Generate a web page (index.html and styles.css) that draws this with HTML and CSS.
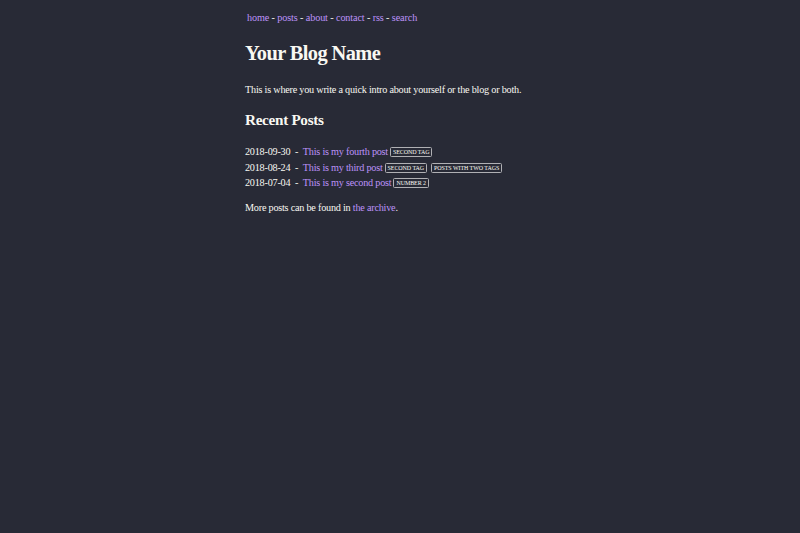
FILE: index.html
```html
<!DOCTYPE html>
<html lang="en">
<head>
<meta charset="utf-8">
<title>Your Blog Name</title>
<link rel="stylesheet" href="styles.css">
</head>
<body>
<div class="page">
  <header class="site-header">
    <nav class="nav">
      <a href="#">home</a> - <a href="#">posts</a> - <a href="#">about</a> - <a href="#">contact</a> - <a href="#">rss</a> - <a href="#">search</a>
    </nav>
  </header>
  <main>
    <h1 class="title">Your Blog Name</h1>
    <p class="intro">This is where you write a quick intro about yourself or the blog or both.</p>
    <h2 class="section-title">Recent Posts</h2>
    <ul class="posts">
      <li class="post"><span class="date">2018-09-30</span>&nbsp; - &nbsp;<a href="#">This is my fourth post</a><span class="tags"><span class="tag">second tag</span></span></li>
      <li class="post"><span class="date">2018-08-24</span>&nbsp; - &nbsp;<a href="#">This is my third post</a><span class="tags"><span class="tag">second tag</span><span class="tag">posts with two tags</span></span></li>
      <li class="post"><span class="date">2018-07-04</span>&nbsp; - &nbsp;<a href="#">This is my second post</a><span class="tags"><span class="tag">number 2</span></span></li>
    </ul>
    <p class="more">More posts can be found in <a href="#">the archive</a>.</p>
  </main>
</div>
</body>
</html>
```
FILE: styles.css
```css
html, body {
  margin: 0;
  padding: 0;
  background: #282a36;
}
body {
  font-family: "Liberation Serif", "Times New Roman", serif;
  font-size: 10.2px;
  letter-spacing: -0.22px;
  line-height: 1.5;
  color: #f8f8f2;
}
.page {
  width: 310px;
  margin: 0 auto;
}
a {
  color: #bd93f9;
  text-decoration: none;
}
.site-header {
  padding: 10px 0 0 2px;
}
.nav {
  letter-spacing: -0.12px;
}
.title {
  font-size: 20.4px;
  letter-spacing: -0.6px;
  margin: 16px 0 0;
  line-height: 1.2;
}
.intro {
  margin: 16px 0 0;
}
.section-title {
  font-size: 15.2px;
  letter-spacing: -0.3px;
  margin: 14px 0 0;
  line-height: 1.2;
}
.posts {
  list-style: none;
  padding: 0;
  margin: 15px 0 0;
}
.post {
  line-height: 15.5px;
}
.tags {
  display: inline-flex;
  gap: 4px;
  margin-left: 2px;
  vertical-align: 1px;
}
.tag {
  display: inline-block;
  font-size: 6px;
  letter-spacing: -0.08px;
  text-transform: uppercase;
  border: 1px solid #b0b0b4;
  border-radius: 1.5px;
  padding: 1px 2px;
  line-height: 6px;
}
.more {
  margin: 9px 0 0;
}
```
